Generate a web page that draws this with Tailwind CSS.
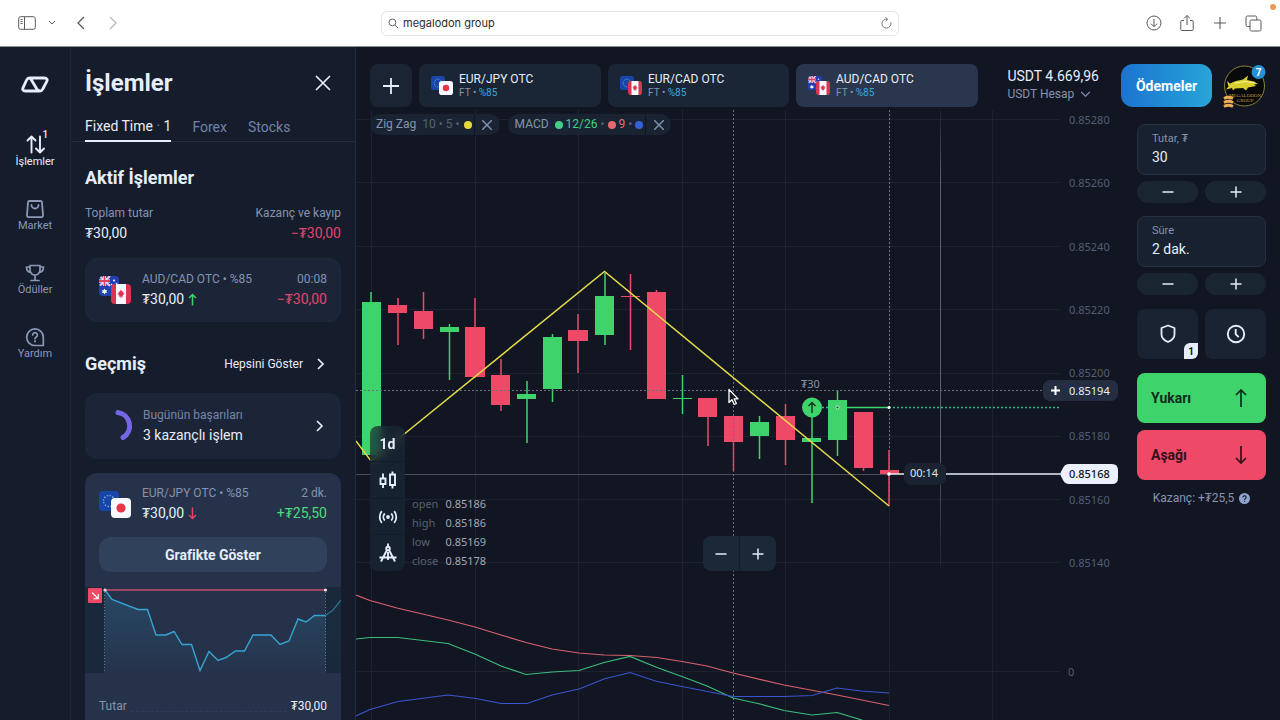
<!DOCTYPE html>
<html lang="tr">
<head>
<meta charset="utf-8">
<meta name="viewport" content="width=device-width, initial-scale=1">
<title>İşlemler</title>
<script src="https://cdn.jsdelivr.net/npm/@tailwindcss/browser@4"></script>
</head>
<body class="flex h-screen flex-col overflow-hidden bg-[#121622] font-['Roboto','Noto_Sans',sans-serif] text-[#e6edfb]">

<svg class="hidden" aria-hidden="true">
  <defs>
    <symbol id="eu" viewBox="0 0 20 20"><rect width="20" height="20" rx="4" fill="#1746a8"/><circle cx="10" cy="10" r="5.500" fill="none" stroke="#8fb2e8" stroke-width="1.300" stroke-dasharray="1.300 1.580"/></symbol>
    <symbol id="jp" viewBox="0 0 20 20"><rect width="20" height="20" rx="4" fill="#f6f8ff"/><circle cx="10" cy="10" r="4.600" fill="#e63749"/></symbol>
    <symbol id="ca" viewBox="0 0 20 20"><rect width="20" height="20" rx="4" fill="#dd3350"/><path d="M5 0h10v20H5z" fill="#f6f8ff"/><path d="M10 5.500l1.300 2.200 1.200-.5-.3 2 1.500.2-2 2.100.2 1.200-1.500-.2v1.800h-.8v-1.800l-1.500.2.200-1.200-2-2.100 1.500-.2-.3-2 1.200.5z" fill="#dd3350"/></symbol>
    <symbol id="au" viewBox="0 0 20 20"><rect width="20" height="20" rx="4" fill="#2440b0"/><path d="M1.500 1l9.500 9M11 0L1 9.500" stroke="#f0c4d6" stroke-width="2.200"/><path d="M5.500 0v10M0 5h11" stroke="#fff" stroke-width="3.200"/><path d="M5.500 0v10M0 5h11" stroke="#e0415f" stroke-width="1.800"/><path d="M5.500 12.500l.9 1.700 1.900-.2-1.100 1.500 1.100 1.500-1.900-.2-.9 1.700-.9-1.700-1.900.2 1.100-1.500-1.100-1.500 1.900.2z" fill="#fff"/><circle cx="15" cy="4.500" r="1" fill="#fff"/><circle cx="12.500" cy="8.500" r=".8" fill="#fff"/><circle cx="17.500" cy="7.500" r=".8" fill="#fff"/></symbol>
  </defs>
</svg>

<header class="flex h-[47px] shrink-0 items-center border-b border-[#8d918c] bg-white px-[18px] text-[#5a5a5a]">
  <div class="flex flex-1 items-center">
    <button aria-label="Kenar çubuğu"><svg width="18" height="14" viewBox="0 0 18 14" fill="none" stroke="currentColor"><rect x=".7" y=".7" width="16.600" height="12.600" rx="2"/><path d="M6.500 1v12M2.500 3.500h2M2.500 5.500h2M2.500 7.500h2"/></svg></button>
    <button aria-label="Gruplar" class="ml-3"><svg width="8" height="6" viewBox="0 0 8 6" fill="none" stroke="currentColor"><path d="M1 1l3 3 3-3"/></svg></button>
    <button aria-label="Geri" class="ml-5"><svg width="10" height="14" viewBox="0 0 10 14" fill="none" stroke="currentColor" stroke-width="1.300"><path d="M8 1L2 7l6 6"/></svg></button>
    <button aria-label="İleri" class="ml-[22px] text-[#b9b9b9]"><svg width="10" height="14" viewBox="0 0 10 14" fill="none" stroke="currentColor" stroke-width="1.300"><path d="M2 1l6 6-6 6"/></svg></button>
  </div>
  <label class="flex h-[25px] w-[518px] items-center rounded-md border border-[#e4e4e4] px-1.5">
    <svg width="11" height="11" viewBox="0 0 12 12" fill="none" stroke="currentColor"><circle cx="4.800" cy="4.800" r="3.700"/><path d="M7.600 7.600l3.400 3.400"/></svg>
    <input aria-label="Adres" value="megalodon group" class="ml-1 min-w-0 flex-1 bg-transparent font-['Inter','Roboto',sans-serif] text-[11px] text-[#2b2b2b] outline-none">
    <svg width="11" height="12" viewBox="0 0 11 12" fill="none" stroke="#777"><path d="M9.800 5.500A4.500 4.500 0 1 1 6.500 2.200M4.500.3l2.200 2-2 2.200"/></svg>
  </label>
  <div class="flex flex-1 items-center justify-end gap-[17px]">
    <button aria-label="İndirilenler"><svg width="16" height="16" viewBox="0 0 16 16" fill="none" stroke="currentColor"><circle cx="8" cy="8" r="7"/><path d="M8 4v7.500M5 8.700l3 3 3-3"/></svg></button>
    <button aria-label="Paylaş"><svg width="16" height="18" viewBox="0 0 16 18" fill="none" stroke="currentColor"><path d="M5 6.500H2.800a1 1 0 0 0-1 1v8a1 1 0 0 0 1 1h10.400a1 1 0 0 0 1-1v-8a1 1 0 0 0-1-1H11M8 11V1.500M5 4.500l3-3 3 3"/></svg></button>
    <button aria-label="Yeni sekme"><svg width="16" height="16" viewBox="0 0 16 16" fill="none" stroke="currentColor" stroke-width="1.100"><path d="M8 2v12M2 8h12"/></svg></button>
    <button aria-label="Sekmeler"><svg width="17" height="17" viewBox="0 0 17 17" fill="none" stroke="currentColor"><rect x="5" y="5" width="11" height="11" rx="1.500"/><path d="M5 11.500H2.500A1.500 1.500 0 0 1 1 10V2.500A1.500 1.500 0 0 1 2.500 1h7.800A1.500 1.500 0 0 1 11.800 2.500V5"/></svg></button>
  </div>
  <span class="absolute right-1 top-1 size-[6px] rounded-full bg-[#e89a50]"></span>
</header>

<div class="flex min-h-0 flex-1">
  <nav class="flex w-[71px] shrink-0 flex-col items-center border-r border-[#1f2737] bg-[#151c2b] pt-[29px] text-[11px] leading-[14px] text-[#8b99b8]">
    <a href="#" aria-label="Ana sayfa" class="text-[#e6edfb]"><svg width="28" height="17" viewBox="0 0 28 17" fill="none" stroke="currentColor" stroke-width="2.800" stroke-linejoin="round"><path d="M8.500 2h15c2.300 0 3.300 1.500 2.300 3.300l-4 7.700c-.6 1.300-1.700 2-3.100 2H4.300c-2.300 0-3.200-1.500-2.200-3.300L5.600 4C6.200 2.700 7.100 2 8.500 2zM9.500 2.500l6.200 10.300c1.200 1.800 2.300 2 3.300 2"/></svg></a>
    <a href="#" class="relative mt-[40px] flex h-16 flex-col items-center text-[#e6edfb]"><svg width="22" height="22" viewBox="0 0 22 22" fill="none" stroke="currentColor" stroke-width="1.900" stroke-linecap="round" stroke-linejoin="round"><path d="M7.500 19.500V3.500M3.500 7.500l4-4 4 4M16 3.500v16M12 15.500l4 4 4-4"/></svg><span>İşlemler</span><span class="absolute -top-1 left-[27px] text-[10px] leading-3 font-medium">1</span></a>
    <a href="#" class="mt-0.5 flex h-16 flex-col items-center"><svg width="20" height="20" viewBox="0 0 20 20" fill="none" stroke="currentColor" stroke-width="1.800" stroke-linecap="round" stroke-linejoin="round"><path d="M4.500 2h11a1.500 1.500 0 0 1 1.500 1.400l1 12.600a2 2 0 0 1-2 2.200H4A2 2 0 0 1 2 16L3 3.400A1.500 1.500 0 0 1 4.500 2zM6.500 6a3.500 3.500 0 0 0 7 0"/></svg><span>Market</span></a>
    <a href="#" class="flex h-16 flex-col items-center"><svg width="20" height="20" viewBox="0 0 20 20" fill="none" stroke="currentColor" stroke-width="1.700" stroke-linecap="round" stroke-linejoin="round"><path d="M5 2.500h10v4.500a5 5 0 0 1-10 0zM5 4H1.500c0 3.500 1.500 5.300 4.500 5.300M15 4h3.500c0 3.500-1.500 5.300-4.500 5.300M10 12v5M6 17.500h8"/></svg><span>Ödüller</span></a>
    <a href="#" class="flex h-16 flex-col items-center"><svg width="20" height="20" viewBox="0 0 20 20" fill="none" stroke="currentColor" stroke-width="1.700" stroke-linecap="round" stroke-linejoin="round"><path d="M10 18.500a8.300 8.300 0 1 1 8.300-8.300v8.300zM7.600 8a2.400 2.400 0 1 1 3.600 2.100c-.8.500-1.200.9-1.200 1.700"/><path d="M10 14.300v.1" stroke-width="2"/></svg><span>Yardım</span></a>
  </nav>

  <aside class="w-[285px] shrink-0 overflow-hidden border-r border-[#242b3b] bg-[#151c2b]">
    <div class="flex items-center justify-between px-[14px] pr-[24px] pt-[20px]">
      <h1 class="text-2xl leading-8 font-bold">İşlemler</h1>
      <button aria-label="Kapat"><svg width="16" height="16" viewBox="0 0 16 16" fill="none" stroke="currentColor" stroke-width="1.700" stroke-linecap="round"><path d="M1.500 1.500l13 13M14.500 1.500l-13 13"/></svg></button>
    </div>
    <div class="mt-[17px] flex gap-[21px] border-b border-[#242c3d] px-[14px] text-sm leading-5 text-[#7384a8]">
      <button class="-mb-px border-b-2 border-[#e6edfb] pb-1 text-[#e6edfb]">Fixed Time<span class="text-[#7384a8]"> · </span>1</button>
      <button class="pb-1">Forex</button>
      <button class="pb-1">Stocks</button>
    </div>
    <div class="px-[14px]">
      <h2 class="mt-6 text-lg leading-6 font-bold">Aktif İşlemler</h2>
      <div class="mt-[15px] flex justify-between text-xs leading-4 text-[#8593b0]"><span>Toplam tutar</span><span>Kazanç ve kayıp</span></div>
      <div class="mt-0.5 flex justify-between text-sm leading-5"><span>₮30,00</span><span class="text-[#e3456a]">−₮30,00</span></div>
      <article class="mt-[15px] flex h-16 items-center rounded-xl border border-[#20293b] bg-[#1c2538] px-[13px]">
        <div class="relative h-[28px] w-8"><svg class="absolute left-0 top-0" width="20" height="20"><use href="#au"/></svg><svg class="absolute bottom-0 right-0" width="20" height="20"><use href="#ca"/></svg></div>
        <div class="ml-[11px] flex-1">
          <div class="flex justify-between text-xs leading-4 text-[#8593b0]"><span>AUD/CAD OTC • %85</span><span>00:08</span></div>
          <div class="mt-0.5 flex justify-between text-sm leading-5"><span class="flex items-center gap-1">₮30,00<svg width="9" height="13" viewBox="0 0 9 13" fill="none" stroke="#3fd36b" stroke-width="1.500"><path d="M4.500 12.500V1.500M1 5l3.500-3.500L8 5"/></svg></span><span class="text-[#e3456a]">−₮30,00</span></div>
        </div>
      </article>
      <div class="mt-[30px] flex items-center">
        <h2 class="text-lg leading-6 font-bold">Geçmiş</h2>
        <a href="#" class="ml-auto mr-4 flex items-center gap-3 text-xs">Hepsini Göster<svg width="10" height="12" viewBox="0 0 10 12" fill="none" stroke="currentColor" stroke-width="1.700"><path d="M3 1l5 5-5 5"/></svg></a>
      </div>
      <article class="mt-[17px] flex h-[66px] items-center rounded-xl bg-[#1c2538] pl-[14px] pr-[17px]">
        <svg width="36" height="36" viewBox="0 0 36 36" fill="none" stroke="#7466e6" stroke-width="5" stroke-linecap="round"><path d="M19 4.500A13.500 13.500 0 0 1 24 29.500"/></svg>
        <div class="ml-2 flex-1"><p class="text-xs leading-4 text-[#7686a8]">Bugünün başarıları</p><p class="mt-0.5 text-sm leading-5">3 kazançlı işlem</p></div>
        <svg width="10" height="12" viewBox="0 0 10 12" fill="none" stroke="currentColor" stroke-width="1.600"><path d="M3 1l5 5-5 5"/></svg>
      </article>
      <article class="mt-[14px] rounded-t-xl bg-[#25324a] pt-[12px]">
        <div class="flex items-center px-[14px]">
          <div class="relative h-[27px] w-8"><svg class="absolute left-0 top-0" width="20" height="20"><use href="#eu"/></svg><svg class="absolute bottom-0 right-0" width="20" height="20"><use href="#jp"/></svg></div>
          <div class="ml-[11px] flex-1">
            <div class="flex justify-between text-xs leading-4 text-[#8593b0]"><span>EUR/JPY OTC • %85</span><span>2 dk.</span></div>
            <div class="mt-0.5 flex justify-between text-sm leading-5"><span class="flex items-center gap-1">₮30,00<svg width="9" height="13" viewBox="0 0 9 13" fill="none" stroke="#e3456a" stroke-width="1.500"><path d="M4.500 .5v11M1 8l3.500 3.500L8 8"/></svg></span><span class="text-[#4ddb80]">+₮25,50</span></div>
          </div>
        </div>
        <div class="px-[14px] pt-[14px]"><button class="h-[35px] w-full rounded-xl bg-[#30415b] text-sm font-bold">Grafikte Göster</button></div>
        <svg class="mt-[15px] block w-full" viewBox="85 587 256 86">
          <defs><linearGradient id="area" x1="0" y1="0" x2="0" y2="1"><stop offset="0" stop-color="#2b6a8c" stop-opacity=".4"/><stop offset="1" stop-color="#2b6a8c" stop-opacity=".02"/></linearGradient></defs>
          <path fill="url(#area)" d="M105 590L112 599.500 138 609.500 147.500 609.500 156 635 166 635 174 631.500 182 644.500 191.500 644.500 200 670.500 209 651.500 218 660.500 226 657.500 235.500 651 244.500 651 253 635 271 635 280 644.500 289 641 298 619 306 622 314.500 615.500 325.500 615.500 341 600V673H105z"/>
          <path fill="#162636" fill-opacity=".75" d="M85 587h19v86H85zM326 587h15v86h-15z"/>
          <path stroke="#63748f" stroke-dasharray="1 2" d="M104.500 592v81M325.500 592v81"/>
          <path stroke="#9c4767" stroke-width="1.800" d="M105 590h220"/>
          <path fill="none" stroke="#37a3d1" stroke-width="1.400" d="M105 590L112 599.500 138 609.500 147.500 609.500 156 635 166 635 174 631.500 182 644.500 191.500 644.500 200 670.500 209 651.500 218 660.500 226 657.500 235.500 651 244.500 651 253 635 271 635 280 644.500 289 641 298 619 306 622 314.500 615.500 325.500 615.500"/>
          <path fill="none" stroke="#2f6b85" stroke-width="1.400" d="M325.500 615.500L333 610 341 600"/>
          <circle cx="105" cy="590" r="1.600" fill="#ffd5df"/><circle cx="325.500" cy="590" r="1.600" fill="#ffd5df"/>
          <rect x="88" y="588" width="14" height="15" rx="1" fill="#ee4a68"/><path fill="none" stroke="#fff" stroke-width="1.100" d="M92 592.500l6 6M98.300 594v4.800h-4.800"/>
        </svg>
        <div class="flex items-end px-[14px] pb-4 pt-[25px] text-xs leading-4"><span class="text-[#8593b0]">Tutar</span><span class="mx-1 mb-0.5 flex-1 border-b border-dashed border-[#2e3c55]"></span><span>₮30,00</span></div>
      </article>
    </div>
  </aside>

  <main class="flex min-w-0 flex-1 flex-col">
    <div class="flex h-[63px] shrink-0 items-start px-[14px] pt-[17px]">
      <button aria-label="Varlık ekle" class="grid h-[43px] w-[42px] shrink-0 place-items-center rounded-lg bg-[#1a2433]"><svg width="16" height="16" viewBox="0 0 16 16" stroke="currentColor" stroke-width="1.800"><path d="M8 0v16M0 8h16"/></svg></button>
      <div class="ml-[7px] flex gap-[7px]">
        <button class="flex h-[43px] w-[182px] items-center rounded-lg bg-[#1a2635] pl-3 text-left"><span class="relative block h-[19px] w-[22px]"><svg class="absolute left-0 top-0" width="14" height="14"><use href="#eu"/></svg><svg class="absolute bottom-0 right-0" width="14" height="14"><use href="#jp"/></svg></span><span class="ml-1.5 block"><span class="block text-xs leading-[14px]">EUR/JPY OTC</span><span class="block text-[10px] leading-[14px] text-[#8593b0]">FT • <span class="text-[#37a9dc]">%85</span></span></span></button>
        <button class="flex h-[43px] w-[181px] items-center rounded-lg bg-[#1a2635] pl-3 text-left"><span class="relative block h-[19px] w-[22px]"><svg class="absolute left-0 top-0" width="14" height="14"><use href="#eu"/></svg><svg class="absolute bottom-0 right-0" width="14" height="14"><use href="#ca"/></svg></span><span class="ml-1.5 block"><span class="block text-xs leading-[14px]">EUR/CAD OTC</span><span class="block text-[10px] leading-[14px] text-[#8593b0]">FT • <span class="text-[#37a9dc]">%85</span></span></span></button>
        <button class="flex h-[43px] w-[182px] items-center rounded-lg bg-[#2a364e] pl-3 text-left"><span class="relative block h-[19px] w-[22px]"><svg class="absolute left-0 top-0" width="14" height="14"><use href="#au"/></svg><svg class="absolute bottom-0 right-0" width="14" height="14"><use href="#ca"/></svg></span><span class="ml-1.5 block"><span class="block text-xs leading-[14px]">AUD/CAD OTC</span><span class="block text-[10px] leading-[14px] text-[#8593b0]">FT • <span class="text-[#37a9dc]">%85</span></span></span></button>
      </div>
      <button class="ml-auto mt-0.5 text-left whitespace-nowrap"><span class="block text-sm leading-5">USDT 4.669,96</span><span class="flex items-center gap-[6px] text-xs leading-4 text-[#8593b0]">USDT Hesap<svg width="11" height="7" viewBox="0 0 12 8" fill="none" stroke="currentColor" stroke-width="1.400"><path d="M1 1l5 5 5-5"/></svg></span></button>
      <button class="ml-[22px] h-[43px] w-[91px] rounded-xl bg-linear-to-r from-[#1d73cf] to-[#28a5d8] text-sm font-bold text-white">Ödemeler</button>
      <button aria-label="Profil" class="ml-[10px] shrink-0"><svg width="44" height="44" viewBox="1222 63 44 44"><circle cx="1244.500" cy="85" r="20" fill="#08090b" stroke="#8a8338"/><path fill="#d9cf2e" d="M1227 80l3 2.500 6-2.500 7-1.500 5-4-1 4.500 7 1.500 4 2.500-4 .5 2 1.500-8 1.500-2 3-3-2.500-8 .5-2 2-1-2.500-6 1.500 2.500-3z"/><path d="M1234 82l12-1.500 9 1.500" stroke="#f7f3a0" fill="none"/><text x="1245" y="96" text-anchor="middle" font-family="Liberation Serif" font-size="5" fill="#c49f35">MEGALODON</text><text x="1245" y="101" text-anchor="middle" font-family="Liberation Serif" font-size="5" fill="#c49f35">GROUP</text><circle cx="1258.500" cy="71" r="7" fill="#2490d8"/><text x="1258.500" y="74.500" text-anchor="middle" font-size="10" font-weight="700" fill="#fff">7</text><path fill="none" stroke="#ecab55" stroke-width="2.800" d="M1224 97.500q4.500-2.500 9 0M1224 101.500q4.500-2.500 9 0M1224 105.500q4.500-2.500 9 0"/></svg></button>
    </div>

    <div class="flex min-h-0 flex-1">
      <section class="relative min-w-0 flex-1 overflow-hidden">
        <svg class="absolute inset-0 size-full" viewBox="356 110 774 610" preserveAspectRatio="xMinYMin slice" font-family="'Noto Sans',sans-serif" font-size="11">
          <defs>
            <linearGradient id="fade" x1="0" y1="0" x2="0" y2="1"><stop offset="0" stop-color="#4d535f" stop-opacity=".2"/><stop offset=".15" stop-color="#5a606b"/><stop offset=".75" stop-color="#5a606b"/><stop offset="1" stop-color="#4d535f" stop-opacity=".2"/></linearGradient>
          </defs>
          <path stroke="#1c222e" d="M371.500 110v610M475.500 110v610M578.500 110v610M682.500 110v610M785.500 110v610M889.500 110v610M992.500 110v610M356 119.500h704M356 182.500h704M356 246.500h704M356 309.500h704M356 373.500h704M356 436.500h704M356 499.500h704M356 562.500h704M356 671.500h704"/>
          <g fill="#535e72"><text x="1069" y="124">0.85280</text><text x="1069" y="187">0.85260</text><text x="1069" y="251">0.85240</text><text x="1069" y="314">0.85220</text><text x="1069" y="377">0.85200</text><text x="1069" y="440">0.85180</text><text x="1069" y="504">0.85160</text><text x="1069" y="567">0.85140</text><text x="1068" y="676">0</text></g>
          <rect x="940" y="110" width="1" height="457" fill="url(#fade)"/>
          <path stroke="#474d57" d="M356 474.500h533"/>
          <path stroke="#3fd36b" stroke-width="1.500" d="M371 292v163M449.500 324v56M527 381v62M552.500 334v68M605 273v72M682.500 375v39M759.500 416v43M812 410v93M837.500 390v66"/>
          <path stroke="#ee4a68" stroke-width="1.500" d="M398 298v47M423.500 292v47M475 298v80M501 359v52M578 314v59M630.500 274v76M656.500 290v20M708 400v46M733.500 420v51M785.500 404v61M863.500 412v59M889 450v56"/>
          <path fill="#3fd36b" d="M362 302h19v153h-19zM440 327h19v5h-19zM517 394h19v5h-19zM543 337h19v52h-19zM595 296h19v39h-19zM673 398h19v1h-19zM750 422h19v14h-19zM802 438h19v4h-19zM828 400h19v40h-19z"/>
          <path fill="#ee4a68" d="M388 305h19v8h-19zM414 311h19v18h-19zM465 327h20v50h-20zM491 375h19v30h-19zM568 330h20v11h-20zM621 296h19v1h-19zM647 292h19v107h-19zM698 398h19v19h-19zM724 416h19v26h-19zM776 416h19v24h-19zM854 412h19v56h-19zM880 470h19v4h-19z"/>
          <path stroke="#6b717d" stroke-dasharray="2 2" d="M356 390.500h688M733.500 110v610M889.500 110v390"/>
          <path fill="none" stroke="#e2da4b" stroke-width="1.500" d="M356 441L371 461 604.500 271.500 889 506"/>
          <path stroke="#3fd36b" stroke-width="1.600" d="M847 407.500h42"/><path stroke="#35b98a" stroke-dasharray="2 2" d="M822 407.500h8M889 407.500h171" stroke-width="1.400"/>
          <path stroke="#e6ebf5" stroke-width="1.600" d="M889 474h171"/>
          <circle cx="812" cy="407.500" r="10" fill="#3fd36b"/><path stroke="#0f3a20" stroke-width="1.500" fill="none" d="M812 413v-10M808.500 406l3.500-3.500 3.500 3.500"/>
          <text x="801" y="388" fill="#8a919e">₮30</text>
          <circle cx="837.500" cy="407.500" r="1.600" fill="#1c5a34" stroke="#c9f5d6"/><circle cx="889" cy="407.500" r="1.500" fill="#fff"/><circle cx="889" cy="474" r="1.800" fill="#fff"/>
          <rect x="904" y="463" width="42" height="22" rx="7" fill="#1b2332"/><text x="924" y="477" text-anchor="middle" fill="#dfe6f3">00:14</text>
          <rect x="1043" y="380" width="75" height="21" rx="7" fill="#252e41"/><path stroke="#fff" stroke-width="2" d="M1055.500 386v9M1051 390.500h9"/><text x="1069" y="395" fill="#e6edfb">0.85194</text>
          <path fill="#eaf0fd" d="M1069 464h43q6 0 6 6v8q0 6-6 6h-43c-5 0-6-4-9-10 3-6 4-10 9-10z"/><text x="1069" y="478" fill="#121622" font-weight="500">0.85168</text>
          <g fill="none" stroke-width="1.200">
            <path stroke="#d7626f" d="M356 595L370 600.500 397 608 448 620 475 627 501 635 526 642.500 552 649 579 653 604 655 630 655.500 657 657.500 682 661.500 707 666 733 673 784 685 837 695 889 705.500"/>
            <path stroke="#3bbd7c" d="M356 639L370 637.500 398 637.500 423 640.500 448 643.500 476 654.500 501 666 526 674.500 552 672 579 670.500 604 662.500 630 656.500 657 667.500 682 676.500 707 686 733 698 760 704 784 710.500 812 715 837 712.500 862 720"/>
            <path stroke="#3a55cf" d="M356 716L370 709.500 398 701.500 448 695 476 698.500 501 703.500 527 703.500 552 695 579 689 604 679 630 672.500 657 681.500 682 686.500 733 696.500 784 696.500 812 695.500 822 692.500 837 688 861 691 889 693"/>
          </g>
          <path fill="#151822" stroke="#fff" stroke-width="1.300" stroke-linejoin="round" d="M729 389.500v13l3-2.700 2.200 4.700 2.200-1-2.200-4.600h3.800z"/>
        </svg>

        <div class="relative flex gap-2 pl-[14px] pt-[4px] text-xs leading-[21px] text-[#8593b0]">
          <div class="flex h-[21px] items-center rounded-full bg-[#1a2332] pl-1.5"><span>Zig Zag</span><span class="ml-1.5 text-[#566279]">10 • 5 •</span><i class="ml-1 size-2 rounded-full bg-[#e6d93c]"></i><button aria-label="Zig Zag kaldır" class="ml-0.5 grid h-full w-[26px] place-items-center border-l border-[#121622]"><svg width="10" height="10" viewBox="0 0 10 10" stroke="currentColor" stroke-width="1.400"><path d="M0 0l10 10M10 0L0 10"/></svg></button></div>
          <div class="flex h-[21px] items-center rounded-full bg-[#1a2332] pl-[7px]"><span>MACD</span><i class="ml-1.5 size-2 rounded-full bg-[#41cf88]"></i><span class="ml-[3px] text-[#41cf88]">12/26</span><span class="mx-[3px] text-[#566279]">•</span><i class="size-2 rounded-full bg-[#e66a70]"></i><span class="ml-[3px] text-[#e66a70]">9</span><span class="mx-[3px] text-[#566279]">•</span><i class="size-2 rounded-full bg-[#3760d8]"></i><button aria-label="MACD kaldır" class="ml-0.5 grid h-full w-[26px] place-items-center border-l border-[#121622]"><svg width="10" height="10" viewBox="0 0 10 10" stroke="currentColor" stroke-width="1.400"><path d="M0 0l10 10M10 0L0 10"/></svg></button></div>
        </div>

        <div class="absolute left-[14px] top-[316px] flex w-[35px] flex-col divide-y divide-[#141c29] overflow-hidden rounded-lg bg-[#1a2837]/70 backdrop-blur-[5px]">
          <button class="h-9 text-sm font-bold">1d</button>
          <button aria-label="Mumlar" class="grid h-[37px] place-items-center"><svg width="18" height="18" viewBox="0 0 18 18" fill="none" stroke="currentColor" stroke-width="1.900"><path d="M1.500 7.500h5V13h-5zM4 2.500v5M4 13v4M11 3.500h5v10.500h-5zM13.500.5v3M13.500 14v3.500"/></svg></button>
          <button aria-label="Sinyaller" class="grid h-9 place-items-center"><svg width="20" height="14" viewBox="0 0 20 14" fill="none" stroke="currentColor" stroke-width="1.800"><circle cx="10" cy="7" r="1" fill="currentColor"/><path d="M6.800 3.500a5 5 0 0 0 0 7M13.200 3.500a5 5 0 0 1 0 7M3.800 1.200a9 9 0 0 0 0 11.600M16.200 1.200a9 9 0 0 1 0 11.600"/></svg></button>
          <button aria-label="Çizim" class="grid h-9 place-items-center"><svg width="18" height="20" viewBox="0 0 18 20" fill="none" stroke="currentColor" stroke-width="1.900"><path d="M9 .5V4M8 7L2 18.500M10 7l6 11.500M.5 14.500h17M9 9v8"/><circle cx="9" cy="5.500" r="1.800"/></svg></button>
        </div>

        <dl class="absolute left-[56px] top-[384px] grid grid-cols-[auto_auto] gap-x-[7px] font-['Noto_Sans',sans-serif] text-[11px] leading-[19px] text-[#a0a7b5]">
          <dt class="text-[#596171]">open</dt><dd>0.85186</dd><dt class="text-[#596171]">high</dt><dd>0.85186</dd><dt class="text-[#596171]">low</dt><dd>0.85169</dd><dt class="text-[#596171]">close</dt><dd>0.85178</dd>
        </dl>

        <div class="absolute left-[347px] top-[426px] flex h-[35px] w-[73px] divide-x divide-[#141c29] rounded-lg bg-[#1a2837]">
          <button aria-label="Uzaklaştır" class="grid flex-1 place-items-center"><svg width="12" height="12" viewBox="0 0 12 12" stroke="currentColor" stroke-width="1.500"><path d="M.5 6h11"/></svg></button>
          <button aria-label="Yakınlaştır" class="grid flex-1 place-items-center"><svg width="12" height="12" viewBox="0 0 12 12" stroke="currentColor" stroke-width="1.500"><path d="M.5 6h11M6 .5v11"/></svg></button>
        </div>
      </section>

      <form class="w-[150px] shrink-0 pl-[7px] pr-[14px] pt-[14px]">
        <label class="block h-[51px] rounded-lg border border-[#26313f] bg-[#18212f] px-[14px] pt-[6px]"><span class="block text-[11px] leading-4 text-[#8593b0]">Tutar, ₮</span><input value="30" class="block w-full bg-transparent text-sm leading-5 outline-none"></label>
        <div class="mt-1.5 flex gap-[7px]">
          <button type="button" aria-label="Tutarı azalt" class="grid h-[22px] flex-1 place-items-center rounded-full bg-[#1a2532]"><svg width="12" height="12" viewBox="0 0 12 12" stroke="currentColor" stroke-width="1.500"><path d="M.5 6h11"/></svg></button>
          <button type="button" aria-label="Tutarı artır" class="grid h-[22px] flex-1 place-items-center rounded-full bg-[#1a2532]"><svg width="12" height="12" viewBox="0 0 12 12" stroke="currentColor" stroke-width="1.500"><path d="M.5 6h11M6 .5v11"/></svg></button>
        </div>
        <label class="mt-[13px] block h-[51px] rounded-lg border border-[#26313f] bg-[#18212f] px-[14px] pt-[6px]"><span class="block text-[11px] leading-4 text-[#8593b0]">Süre</span><input value="2 dak." class="block w-full bg-transparent text-sm leading-5 outline-none"></label>
        <div class="mt-1.5 flex gap-[7px]">
          <button type="button" aria-label="Süreyi azalt" class="grid h-[22px] flex-1 place-items-center rounded-full bg-[#1a2532]"><svg width="12" height="12" viewBox="0 0 12 12" stroke="currentColor" stroke-width="1.500"><path d="M.5 6h11"/></svg></button>
          <button type="button" aria-label="Süreyi artır" class="grid h-[22px] flex-1 place-items-center rounded-full bg-[#1a2532]"><svg width="12" height="12" viewBox="0 0 12 12" stroke="currentColor" stroke-width="1.500"><path d="M.5 6h11M6 .5v11"/></svg></button>
        </div>
        <div class="mt-[14px] flex gap-[7px]">
          <button type="button" aria-label="Koruma" class="relative grid h-[50px] flex-1 place-items-center rounded-lg bg-[#1a2331]"><svg width="18" height="20" viewBox="0 0 18 20" fill="none" stroke="currentColor" stroke-width="1.800" stroke-linejoin="round"><path d="M9 1.500L15.500 4v6.500c0 3.500-3 6-6.500 7.500-3.500-1.500-6.500-4-6.500-7.500V4z"/></svg><span class="absolute bottom-0 right-0 grid h-4 w-[14px] place-items-center rounded-tl-md rounded-br-md bg-[#e6edfb] text-[10px] font-bold text-[#121622]">1</span></button>
          <button type="button" aria-label="Bekleyen emir" class="grid h-[50px] flex-1 place-items-center rounded-lg bg-[#1a2331]"><svg width="20" height="20" viewBox="0 0 20 20" fill="none" stroke="currentColor" stroke-width="1.900"><circle cx="10" cy="10" r="8.200"/><path d="M9.700 5v5.200l3 3"/></svg></button>
        </div>
        <button type="button" class="mt-[14px] flex h-[50px] w-full items-center justify-between rounded-lg bg-[#3fd36b] pl-[14px] pr-[18px] text-sm font-bold text-[#0f2c1a]">Yukarı<svg width="14" height="20" viewBox="0 0 14 20" fill="none" stroke="currentColor" stroke-width="1.700"><path d="M7 19V2M2 7l5-5 5 5"/></svg></button>
        <button type="button" class="mt-[7px] flex h-[50px] w-full items-center justify-between rounded-lg bg-[#ee4a68] pl-[14px] pr-[18px] text-sm font-bold text-[#350f1c]">Aşağı<svg width="14" height="20" viewBox="0 0 14 20" fill="none" stroke="currentColor" stroke-width="1.700"><path d="M7 1v17M2 13l5 5 5-5"/></svg></button>
        <p class="mt-[10px] flex items-center justify-center gap-[5px] text-xs leading-4 whitespace-nowrap text-[#8593b0]">Kazanç: +₮25,5<svg width="11" height="11" viewBox="0 0 11 11"><circle cx="5.500" cy="5.500" r="5.500" fill="#8fa3cc"/><path d="M3.900 4.400a1.600 1.600 0 1 1 2.400 1.300c-.6.300-.8.600-.8 1.100M5.500 7.700v1" fill="none" stroke="#121622" stroke-width="1.100"/></svg></p>
      </form>
    </div>
  </main>
</div>
</body>
</html>
